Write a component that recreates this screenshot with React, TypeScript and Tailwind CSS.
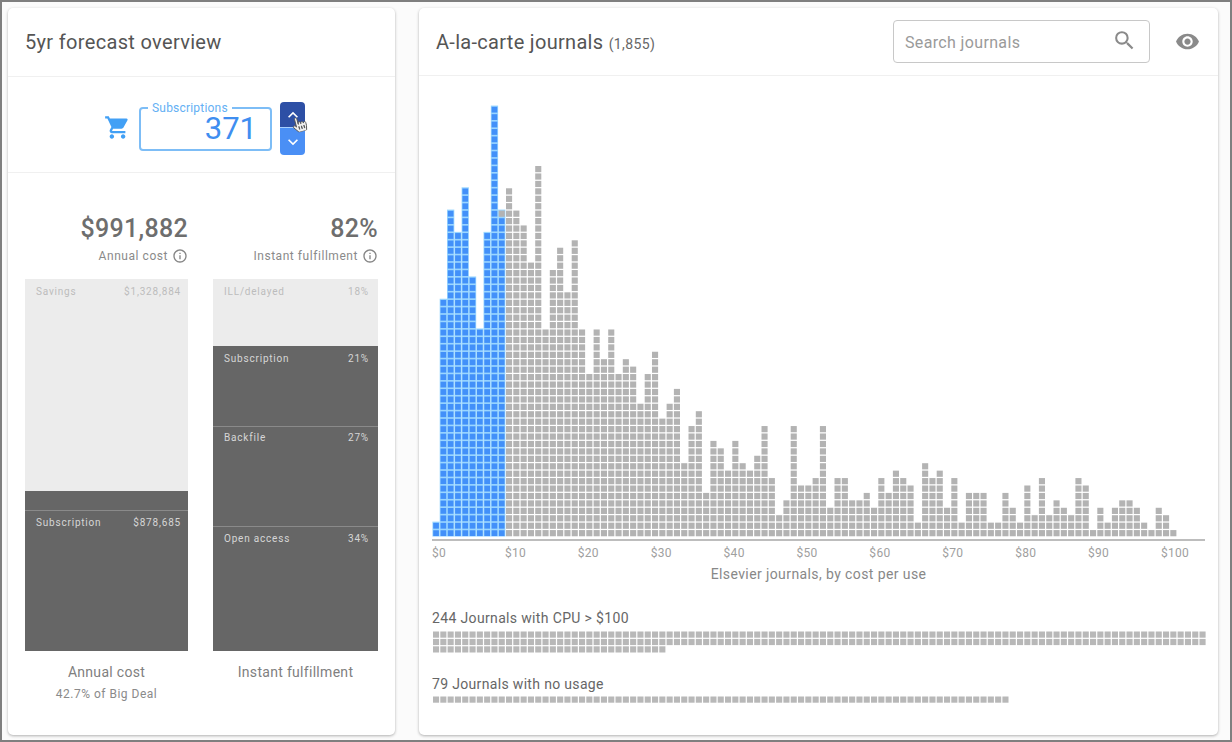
import React from "react";
import { MdShoppingCart, MdSearch, MdVisibility, MdInfoOutline, MdKeyboardArrowUp, MdKeyboardArrowDown } from "react-icons/md";
import { FaHandPointer } from "react-icons/fa";

const H = [2,32,44,41,47,35,28,41,58,44,47,44,42,37,50,28,36,39,33,40,28,22,28,24,28,22,24,23,18,22,25,16,18,20,10,15,17,6,13,12,9,13,10,9,11,15,8,3,5,15,7,7,8,15,4,8,8,5,5,6,4,8,6,9,8,7,2,10,8,9,4,8,2,6,6,6,2,2,6,4,2,7,3,8,3,5,4,3,8,7,1,4,2,4,5,5,4,2,1,4,3,1];
const PX = 7.3;
const PY = 7.43;
const BASE = 433.5;

function Histogram() {
  const cells: React.ReactNode[] = [];
  H.forEach((h, c) => {
    for (let r = 0; r < h; r++) {
      const blue = c <= 9 && !(c === 9 && r === h - 1);
      cells.push(
        <rect
          key={c + "-" + r}
          x={1 + c * PX + (blue ? 0.2 : 0)}
          y={BASE - (r + 1) * PY + 1 + (blue ? 0.2 : 0)}
          width={blue ? 5.7 : 6.1}
          height={blue ? 5.8 : 6.2}
          fill={blue ? "#4290f9" : "#b3b3b3"}
        />
      );
    }
  });
  return (
    <svg width={775} height={436} className="block">
      {H.slice(0, 10).map((h, c) => (
        <rect key={c} x={0.4 + c * PX} y={BASE - h * PY} width={PX} height={h * PY} fill="#9ad6ff" />
      ))}
      {cells}
    </svg>
  );
}

function Strip({ n, rows }: { n: number; rows: number }) {
  const cells: React.ReactNode[] = [];
  for (let i = 0; i < n; i++) {
    cells.push(<rect key={i} x={1 + (i % 106) * PX} y={Math.floor(i / 106) * 7.4 + 0.5} width={6.1} height={6.2} fill="#b8b8b8" />);
  }
  return (
    <svg width={775} height={rows * 7.4} className="block">
      {cells}
    </svg>
  );
}

function Segment({ label, value, h, dark, line, narrow, tight }: { label?: string; value?: string; h: number; dark?: boolean; line?: boolean; narrow?: boolean; tight?: boolean }) {
  return (
    <div
      style={{ height: h }}
      className={
        "flex justify-between pl-[11px] text-[10px] leading-[14px] tracking-[0.8px] " +
        (narrow ? "pr-[7px] " : "pr-[9px] ") +
        (dark ? "bg-[#666666] text-[#d6d6d6] " : "bg-[#ececec] text-[#bcbcbc] ") +
        (tight ? "pt-[4px] " : line ? "pt-[5px] " : "pt-[6px] ") +
        (line ? "border-t border-[#8a8a8a]" : "")
      }
    >
      <span>{label}</span>
      <span>{value}</span>
    </div>
  );
}

function Stat({ value, label }: { value: string; label: string }) {
  return (
    <div className="flex flex-col items-end">
      <div className="text-[25px] leading-[28px] font-medium tracking-[0.3px] text-[#6e6e6e]">{value}</div>
      <div className="mt-[5px] flex items-center gap-[4px] text-[12px] leading-[16px] tracking-[0.55px] text-[#8a8a8a]">
        <span>{label}</span>
        <MdInfoOutline size={16} className="text-[#858585]" />
      </div>
    </div>
  );
}

function Card({ className, children }: { className: string; children: React.ReactNode }) {
  return (
    <div className={"flex flex-col rounded-[5px] bg-white shadow-[0_1px_3px_rgba(0,0,0,0.3)] " + className}>{children}</div>
  );
}

export default function App() {
  return (
    <div
      className="flex h-[742px] w-[1232px] gap-[24px] overflow-hidden border-2 border-[#7f7f7f] bg-[#fbfbfb] pl-[6px] pr-[12px] pt-[6px] text-[#555555]"
      style={{ fontFamily: "Roboto, 'Liberation Sans', sans-serif" }}
    >
      <Card className="h-[727px] w-[387px]">
        <div className="flex h-[69px] items-center border-b border-[#f0f0f0] pl-[17px] text-[20px] tracking-[0.33px] text-[#555555]">5yr forecast overview</div>

        <div className="flex h-[96px] items-center justify-center border-b border-[#f0f0f0] pl-[6px] pt-[8px]">
          <MdShoppingCart size={27} className="mt-[-3px] text-[#42a0f5]" />
          <div className="relative ml-[8px] flex h-[44px] w-[133px] items-center justify-end rounded-[4px] border-2 border-[#7dbdf6] pr-[13px] pt-[2px] text-[31px] text-[#3f8ef0]">
            371
            <span className="absolute left-[7px] top-[-8px] bg-white px-[4px] text-[12px] leading-[14px] tracking-[0.2px] text-[#64b0f4]">Subscriptions</span>
          </div>
          <div className="relative ml-[8px] flex h-[53px] w-[25px] flex-col overflow-visible">
            <div className="flex h-[26px] items-center justify-center rounded-t-[4px] border-b border-[#a8d0ff] bg-[#2d4fa5] text-white">
              <MdKeyboardArrowUp size={20} />
            </div>
            <div className="flex h-[27px] items-center justify-center rounded-b-[4px] bg-[#4a8ff5] text-white">
              <MdKeyboardArrowDown size={20} />
            </div>
            <FaHandPointer size={15} className="absolute left-[12px] top-[15px] rotate-[-15deg] text-[#f0f0f0] [stroke:#555555] [stroke-width:30]" />
          </div>
        </div>

        <div className="grid grid-cols-[163px_165px] gap-x-[25px] px-[17px] pt-[42px]">
          <Stat value="$991,882" label="Annual cost" />
          <Stat value="82%" label="Instant fulfillment" />

          <div className="mt-[15px] flex flex-col">
            <Segment label="Savings" value="$1,328,884" h={212} narrow />
            <div className="h-[19px] bg-[#666666]" />
            <Segment label="Subscription" value="$878,685" h={141} dark line narrow />
          </div>
          <div className="mt-[15px] flex flex-col">
            <Segment label="ILL/delayed" value="18%" h={67} />
            <Segment label="Subscription" value="21%" h={80} dark />
            <Segment label="Backfile" value="27%" h={100} dark line tight />
            <Segment label="Open access" value="34%" h={125} dark line />
          </div>

          <div className="mt-[12px] text-center text-[14px] leading-[18px] tracking-[0.3px] text-[#808080]">
            Annual cost
            <div className="mt-[5px] text-[12px] leading-[16px] tracking-[0.5px] text-[#8a8a8a]">42.7% of Big Deal</div>
          </div>
          <div className="mt-[12px] text-center text-[14px] leading-[18px] tracking-[0.3px] text-[#808080]">Instant fulfillment</div>
        </div>
      </Card>

      <Card className="h-[727px] w-[799px]">
        <div className="flex h-[68px] items-center border-b border-[#f0f0f0] pl-[17px] pr-[18px]">
          <div className="text-[20px] tracking-[0.3px] text-[#555555]">
            A-la-carte journals <span className="text-[14px] tracking-[0.4px] text-[#666666]">(1,855)</span>
          </div>
          <div className="ml-auto flex h-[43px] w-[257px] items-center justify-between rounded-[4px] border border-[#c8c8c8] pl-[11px] pr-[12px] text-[16px] tracking-[0.35px] text-[#9a9a9a]">
            <span className="pt-[2px]">Search journals</span>
            <MdSearch size={25} className="mt-[-2px] text-[#8a8a8a]" />
          </div>
          <MdVisibility size={25} className="ml-[25px] text-[#8a8a8a]" />
        </div>

        <div className="flex flex-1 flex-col pl-[13px] pt-[27px]">
          <Histogram />
          <div className="h-[2px] w-[773px] bg-[#bdbdbd]" />
          <div className="mt-[4px] flex h-[16px] w-[773px] text-[12px] leading-[16px] tracking-[0.3px] text-[#a0a0a0]">
            {["$0","$10","$20","$30","$40","$50","$60","$70","$80","$90","$100"].map((t) => (
              <span key={t} className="w-[72.9px] shrink-0">{t}</span>
            ))}
          </div>
          <div className="mt-[4px] w-[773px] text-center text-[14px] leading-[18px] tracking-[0.4px] text-[#888888]">Elsevier journals, by cost per use</div>
          <div className="mt-[26px] text-[14px] leading-[18px] tracking-[0.35px] text-[#666666]">244 Journals with CPU &gt; $100</div>
          <div className="mt-[4px]"><Strip n={244} rows={3} /></div>
          <div className="mt-[22px] text-[14px] leading-[18px] tracking-[0.33px] text-[#666666]">79 Journals with no usage</div>
          <div className="mt-[3px]"><Strip n={79} rows={1} /></div>
        </div>
      </Card>
    </div>
  );
}
